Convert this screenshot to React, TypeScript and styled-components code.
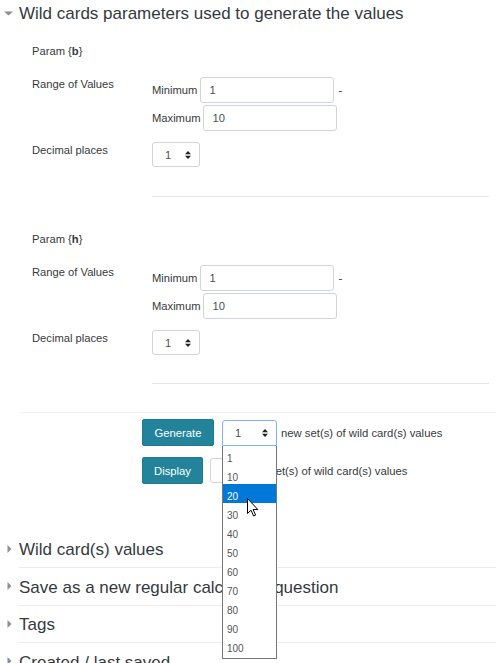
import React from "react";
import styled, { createGlobalStyle } from "styled-components";

const GlobalStyle = createGlobalStyle`
  html, body { margin: 0; padding: 0; background: #fff; }
  body { font-family: "Liberation Sans", Arial, Helvetica, sans-serif; color: #373a3c; }
  *, *::before, *::after { box-sizing: border-box; }
`;

const Page = styled.div`
  position: relative;
  width: 496px;
  height: 663px;
  overflow: hidden;
`;

const ExpandedHeader = styled.div`
  display: flex;
  padding-top: 4px;
`;

const CaretBox = styled.span<{ $left: number; $top: number }>`
  flex: none;
  width: 19px;
  height: 20px;
  display: block;
  padding-left: ${(p) => p.$left}px;
  padding-top: ${(p) => p.$top}px;
  svg { display: block; }
`;

const Legend = styled.h2`
  margin: 0;
  font-size: 17px;
  line-height: 20px;
  font-weight: 400;
  color: #343a40;
`;

const ParamGroup = styled.div`
  padding: 0 7px 0 32px;
`;

const FormRow = styled.div<{ $mt: number }>`
  display: grid;
  grid-template-columns: 120px 1fr;
  align-items: start;
  margin-top: ${(p) => p.$mt}px;
`;

const RowLabel = styled.div<{ $shift?: number }>`
  font-size: 11.2px;
  line-height: 16px;
  margin-top: ${(p) => p.$shift ?? 0}px;
  b { font-weight: 700; }
`;

const RangeStack = styled.div`
  display: flex;
  flex-direction: column;
  gap: 2px;
`;

const RangeLine = styled.div`
  display: flex;
  align-items: center;
`;

const InlineLabel = styled.span`
  font-size: 11.2px;
  line-height: 16px;
  margin-right: 3px;
`;

const TextInput = styled.div`
  width: 134px;
  height: 26px;
  border: 1px solid #ced4da;
  border-radius: 3px;
  padding: 0 8px;
  display: flex;
  align-items: center;
  font-size: 11.2px;
  color: #495057;
  background: #fff;
`;

const Dash = styled.span`
  font-size: 11.2px;
  margin-left: 4px;
`;

const Divider = styled.hr<{ $mt: number }>`
  margin: ${(p) => p.$mt}px 0 0 120px;
  border: 0;
  border-top: 1px solid #e5e5e5;
  height: 0;
`;

const ActionArea = styled.div`
  margin: 28px 0 0 20px;
  border-top: 1px solid #f0f0f0;
  padding: 6px 0 0 122px;
`;

const ActionRow = styled.div<{ $mt: number; $gap: number }>`
  display: flex;
  align-items: center;
  gap: ${(p) => p.$gap}px;
  margin-top: ${(p) => p.$mt}px;
`;

const Button = styled.button<{ $w: number; $h: number }>`
  width: ${(p) => p.$w}px;
  height: ${(p) => p.$h}px;
  padding: 0;
  border: 1px solid #1d7a91;
  border-radius: 2px;
  background: #22839b;
  color: #fff;
  font-family: inherit;
  font-size: 11.3px;
  cursor: pointer;
`;

const SelectWrap = styled.div`
  position: relative;
`;

const SelectBox = styled.div<{ $w: number; $h: number; $focus?: boolean }>`
  width: ${(p) => p.$w}px;
  height: ${(p) => p.$h}px;
  border: 1px solid ${(p) => (p.$focus ? "#80b5ea" : "#ced4da")};
  border-radius: ${(p) => (p.$focus ? "3px 3px 0 0" : "3px")};
  padding: 0 8px 0 12px;
  display: flex;
  align-items: center;
  justify-content: space-between;
  font-size: 11.2px;
  color: #495057;
  background: #fff;
  svg { display: block; }
`;

const ActionText = styled.span<{ $ml: number }>`
  font-size: 11.3px;
  margin-left: ${(p) => p.$ml}px;
  white-space: nowrap;
`;

const Dropdown = styled.div`
  position: absolute;
  top: 100%;
  left: 0;
  right: 0;
  background: #fff;
  border: 1px solid #767676;
  border-top: 0;
  padding-bottom: 3px;
  z-index: 5;
`;

const Option = styled.div<{ $active?: boolean }>`
  height: 19px;
  padding: 6px 0 0 4px;
  line-height: 13px;
  font-size: 10px;
  color: ${(p) => (p.$active ? "#fff" : "#555")};
  background: ${(p) => (p.$active ? "#0078d7" : "transparent")};
`;

const Cursor = styled.svg`
  position: absolute;
  left: 24px;
  top: 52px;
  z-index: 6;
`;

const CollapsedSection = styled.section<{ $mt?: number }>`
  display: flex;
  margin-top: ${(p) => p.$mt ?? 0}px;
`;

const SectionBody = styled.div`
  flex: 1;
  padding: 9.5px 0 7px;
  border-bottom: 1px solid #ececec;
`;

const SectionTitle = styled.h3`
  margin: 0;
  font-size: 17px;
  line-height: 20px;
  font-weight: 400;
  color: #343a40;
  white-space: nowrap;
`;

const SortArrows = () => (
  <svg width="6" height="8" viewBox="0 0 6 8">
    <polygon points="0,3.2 6,3.2 3,0" fill="#222" />
    <polygon points="0,4.8 6,4.8 3,8" fill="#222" />
  </svg>
);

const DownCaret = () => (
  <svg width="9" height="5" viewBox="0 0 9 5">
    <polygon points="0,0.5 9,0.5 4.5,4.5" fill="#8a8f96" />
  </svg>
);

const RightCaret = () => (
  <svg width="5" height="8" viewBox="0 0 5 8">
    <polygon points="0.5,0 4.5,4 0.5,8" fill="#8a8f96" />
  </svg>
);

type ParamProps = { name: string; first?: boolean };

const ParamBlock = ({ name, first }: ParamProps) => (
  <>
    <FormRow $mt={first ? 19 : 34}>
      <RowLabel>
        Param {"{"}
        <b>{name}</b>
        {"}"}
      </RowLabel>
    </FormRow>
    <FormRow $mt={18}>
      <RowLabel $shift={-1}>Range of Values</RowLabel>
      <RangeStack>
        <RangeLine>
          <InlineLabel>Minimum</InlineLabel>
          <TextInput>1</TextInput>
          <Dash>-</Dash>
        </RangeLine>
        <RangeLine>
          <InlineLabel>Maximum</InlineLabel>
          <TextInput>10</TextInput>
        </RangeLine>
      </RangeStack>
    </FormRow>
    <FormRow $mt={11}>
      <RowLabel>Decimal places</RowLabel>
      <div>
        <SelectBox $w={48} $h={25}>
          <span>1</span>
          <SortArrows />
        </SelectBox>
      </div>
    </FormRow>
    <Divider $mt={first ? 29 : 28} />
  </>
);

const options = ["1", "10", "20", "30", "40", "50", "60", "70", "80", "90", "100"];

const collapsed = [
  "Wild card(s) values",
  "Save as a new regular calculated question",
  "Tags",
  "Created / last saved",
];

export default function App() {
  return (
    <Page>
      <GlobalStyle />
      <ExpandedHeader>
        <CaretBox $left={4} $top={6.5}>
          <DownCaret />
        </CaretBox>
        <Legend>Wild cards parameters used to generate the values</Legend>
      </ExpandedHeader>

      <ParamGroup>
        <ParamBlock name="b" first />
        <ParamBlock name="h" />
      </ParamGroup>

      <ActionArea>
        <ActionRow $mt={0} $gap={8}>
          <Button $w={72} $h={27}>Generate</Button>
          <SelectWrap>
            <SelectBox $w={55} $h={26} $focus>
              <span>1</span>
              <SortArrows />
            </SelectBox>
            <Dropdown>
              {options.map((o) => (
                <Option key={o} $active={o === "20"}>
                  {o}
                </Option>
              ))}
              <Cursor width="12" height="19" viewBox="0 0 12 19">
                <path
                  d="M0.5 0.5 L0.5 15.5 L4 12.2 L6.6 18 L8.6 17.1 L6.1 11.5 L10.8 11.5 Z"
                  fill="#fff"
                  stroke="#000"
                  strokeWidth="1"
                  strokeLinejoin="miter"
                />
              </Cursor>
            </Dropdown>
          </SelectWrap>
          <ActionText $ml={-4}>new set(s) of wild card(s) values</ActionText>
        </ActionRow>
        <ActionRow $mt={11} $gap={7}>
          <Button $w={61} $h={27}>Display</Button>
          <SelectBox $w={56} $h={25}>
            <span>1</span>
            <SortArrows />
          </SelectBox>
          <ActionText $ml={-3}>set(s) of wild card(s) values</ActionText>
        </ActionRow>
      </ActionArea>

      {collapsed.map((t, i) => (
        <CollapsedSection key={t} $mt={i === 0 ? 46.5 : 0}>
          <CaretBox $left={6.5} $top={14}>
            <RightCaret />
          </CaretBox>
          <SectionBody>
            <SectionTitle>{t}</SectionTitle>
          </SectionBody>
        </CollapsedSection>
      ))}
    </Page>
  );
}
